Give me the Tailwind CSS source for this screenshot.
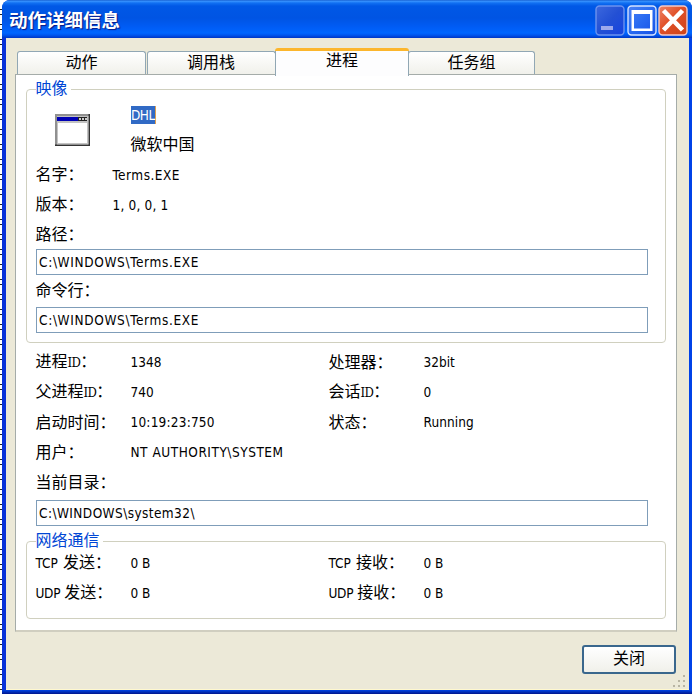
<!DOCTYPE html>
<html lang="zh-CN">
<head>
<meta charset="utf-8">
<title>动作详细信息</title>
<script src="https://cdn.jsdelivr.net/npm/@tailwindcss/browser@4"></script>
</head>
<body class="flex h-[694px] w-[692px] overflow-hidden bg-white font-['Noto_Sans_CJK_SC',sans-serif] text-[16px] text-black">
<!-- sliver of the window behind -->
<div class="w-[2px] shrink-0 bg-[repeating-linear-gradient(to_bottom,#fff_0_9px,#222_9px_10px,#fff_10px_14px,#222_14px_15px)]"></div>
<div class="flex h-[694px] w-[690px] flex-col overflow-hidden rounded-t-[8px] bg-[#0038d8]">
  <header class="flex h-[38px] shrink-0 items-center justify-between bg-[linear-gradient(to_bottom,#0a4fc4_0,#3c96ff_1px,#1170f2_3px,#0058e6_6px,#0054e3_18px,#005cf5_27px,#0066ff_33px,#0057f0_35px,#0036c5_38px)] pl-[7px] pr-[4px] pt-[2px]">
    <h1 class="whitespace-nowrap pb-[3px] text-[18.5px] font-bold leading-[30px] text-white [text-shadow:1px_1px_1px_#0a1883]">动作详细信息</h1>
    <div class="flex gap-[1.5px]">
      <svg width="30" height="31" viewBox="0 0 30 31"><defs><linearGradient id="a" x2="1" y2="1"><stop stop-color="#3c68de"/><stop offset=".5" stop-color="#2350d4"/><stop offset="1" stop-color="#1743e0"/></linearGradient></defs><rect x="1" y="1" width="28" height="29" rx="3.5" fill="url(#a)" stroke="#6c92ee" stroke-width="1.4"/><rect x="6" y="21" width="12" height="4" fill="#9da9ec"/></svg>
      <svg width="30" height="31" viewBox="0 0 30 31"><defs><linearGradient id="b" x2="1" y2="1"><stop stop-color="#4c82f4"/><stop offset=".5" stop-color="#286af1"/><stop offset="1" stop-color="#1550e5"/></linearGradient></defs><rect x="1" y="1" width="28" height="29" rx="3.5" fill="url(#b)" stroke="#d5e3ff" stroke-width="1.4"/><path fill="#fff" fill-rule="evenodd" d="M4.500 5h21v21h-21zM7 9v14.500h16V9z"/></svg>
      <svg width="30" height="31" viewBox="0 0 30 31"><defs><linearGradient id="c" x2="1" y2="1"><stop stop-color="#ee8468"/><stop offset=".45" stop-color="#e05028"/><stop offset="1" stop-color="#cc4218"/></linearGradient></defs><rect x="1" y="1" width="28" height="29" rx="3.5" fill="url(#c)" stroke="#f3c9c5" stroke-width="1.4"/><path d="M5.500 5.500l19 19.500M24.500 5.500L5.500 25" stroke="#fff" stroke-width="4.600"/></svg>
    </div>
  </header>
  <main class="relative flex h-[652px] flex-col border-l-[4px] border-r-[3px] border-l-[#0831d9] border-r-[#0042e8] bg-[#ece9d8] pl-[9px] pt-[10px] shadow-[inset_0_-1px_0_#fff8cf]">
    <nav class="flex h-[27px] items-end pl-[2px] leading-[19px]">
      <div class="h-[24px] w-[129px] rounded-t-[3px] border border-b-0 border-[#91a7b4] bg-linear-to-b from-white to-[#f0f0ea] text-center">动作</div>
      <div class="ml-[1px] h-[24px] w-[129px] rounded-t-[3px] border border-b-0 border-[#91a7b4] bg-linear-to-b from-white to-[#f0f0ea] pr-[1px] text-center">调用栈</div>
      <div class="relative z-10 -mb-[1px] ml-[-1px] h-[28px] w-[134px] rounded-t-[3px] border-t-[3px] border-t-[#fcb62c] bg-[#fdfdfe] text-center leading-[17px] shadow-[inset_1px_0_0_#91a7b4,inset_-1px_0_0_#91a7b4]">进程</div>
      <div class="-ml-[1px] h-[24px] w-[127px] rounded-t-[3px] border border-b-0 border-[#91a7b4] bg-linear-to-b from-white to-[#f0f0ea] text-center">任务组</div>
    </nav>
    <section class="-mt-[1px] h-[558px] w-[662px] border border-b-2 border-[#a5aca9] border-b-[#d0cec0] bg-white px-[10px] pt-[14px]">
      <!-- image group -->
      <div class="h-[254px] w-[640px] rounded-[4px] border border-[#d0d0bf] pl-[8.5px]">
        <div class="-mt-[14px] mb-[2px] w-[35px] bg-white text-[#0046d5] leading-[22px]"><span>映像</span></div>
        <div class="flex h-[60px]">
          <div class="w-[94.5px] pl-[19px] pt-[14px]">
            <svg width="36" height="34" viewBox="0 0 36 34"><path d="M0 0h35v32H0z" fill="#333"/><path d="M0 0h33.500v30.500H0z" fill="#909090"/><path d="M2 2h31.500v28.500H2z" fill="#c3c3c3"/><path d="M2 3h30v4H2z" fill="#0000b4"/><path d="M23 3h9v4h-9z" fill="#222"/><path d="M24 4h2v2h-2zM27 4h2v2h-2zM30 4h2v2h-2z" fill="#ccc"/><path d="M3 9h29v20H3z" fill="#fff"/></svg>
          </div>
          <div class="flex flex-col">
            <div class="flex h-[30px] items-center"><span class="ml-[1px] h-[18px] w-[25px] border-r border-[#e0a050] bg-[#316ac5] font-['DejaVu_Sans_Condensed','DejaVu_Sans',sans-serif] text-[13.5px] leading-[19px] tracking-[-0.5px] text-white">DHL</span></div>
            <div class="h-[29px] pl-[0.5px] leading-[27px]">微软中国</div>
          </div>
        </div>
        <div class="flex h-[30px] items-center"><div class="w-[77px] pb-[5px]">名字：</div><div class="font-['DejaVu_Sans_Condensed','DejaVu_Sans',sans-serif] text-[13.5px] tracking-[0.5px]">Terms.EXE</div></div>
        <div class="flex h-[30px] items-center"><div class="w-[77px] pb-[5px]">版本：</div><div class="font-['DejaVu_Sans_Condensed','DejaVu_Sans',sans-serif] text-[13.5px] tracking-[0.2px]">1, 0, 0, 1</div></div>
        <div class="flex h-[29px] items-center pb-[4px]">路径：</div>
        <div class="flex h-[26px] w-[612px] items-center border border-[#7f9db9] pl-[2.5px] font-['DejaVu_Sans_Condensed','DejaVu_Sans',sans-serif] text-[13.5px] tracking-[0.65px]">C:\WINDOWS\Terms.EXE</div>
        <div class="flex h-[32px] items-center pb-[4px]">命令行：</div>
        <div class="flex h-[26px] w-[612px] items-center border border-[#7f9db9] pl-[2.5px] font-['DejaVu_Sans_Condensed','DejaVu_Sans',sans-serif] text-[13.5px] tracking-[0.65px]">C:\WINDOWS\Terms.EXE</div>
      </div>
      <!-- process details -->
      <div class="grid grid-cols-[95px_198px_95px_1fr] auto-rows-[30px] items-center whitespace-nowrap pl-[9.5px] pt-[4px]">
        <div class="pb-[3px]">进程<span class="font-['DejaVu_Serif_Condensed','DejaVu_Sans',sans-serif] text-[13px] tracking-[-0.6px]">ID</span>：</div><div class="font-['DejaVu_Sans_Condensed','DejaVu_Sans',sans-serif] text-[13.5px]">1348</div>
        <div class="pb-[3px]">处理器：</div><div class="font-['DejaVu_Sans_Condensed','DejaVu_Sans',sans-serif] text-[13.5px]">32bit</div>
        <div class="pb-[3px]">父进程<span class="font-['DejaVu_Serif_Condensed','DejaVu_Sans',sans-serif] text-[13px] tracking-[-0.6px]">ID</span>：</div><div class="font-['DejaVu_Sans_Condensed','DejaVu_Sans',sans-serif] text-[13.5px]">740</div>
        <div class="pb-[3px]">会话<span class="font-['DejaVu_Serif_Condensed','DejaVu_Sans',sans-serif] text-[13px] tracking-[-0.6px]">ID</span>：</div><div class="font-['DejaVu_Sans_Condensed','DejaVu_Sans',sans-serif] text-[13.5px]">0</div>
        <div class="pb-[3px]">启动时间：</div><div class="font-['DejaVu_Sans_Condensed','DejaVu_Sans',sans-serif] text-[13.5px] tracking-[0.2px]">10:19:23:750</div>
        <div class="pb-[3px]">状态：</div><div class="font-['DejaVu_Sans_Condensed','DejaVu_Sans',sans-serif] text-[13.5px] tracking-[0.1px]">Running</div>
        <div class="pb-[3px]">用户：</div><div class="col-span-3 font-['DejaVu_Sans_Condensed','DejaVu_Sans',sans-serif] text-[13.5px] tracking-[0.53px]">NT AUTHORITY\SYSTEM</div>
        <div class="col-span-4 pb-[3px]">当前目录：</div>
      </div>
      <div class="ml-[9.5px] mt-[3px] flex h-[26px] w-[612px] items-center border border-[#7f9db9] pl-[2.5px] font-['DejaVu_Sans_Condensed','DejaVu_Sans',sans-serif] text-[13.5px] tracking-[0.42px]">C:\WINDOWS\system32\</div>
      <!-- network group -->
      <div class="mt-[15px] h-[78px] w-[640px] rounded-[4px] border border-[#d0d0bf] pl-[8.5px]">
        <div class="-mt-[14px] w-[67px] bg-white text-[#0046d5] leading-[22px]"><span>网络通信</span></div>
        <div class="-mt-[2px] grid grid-cols-[95px_198px_95px_1fr] auto-rows-[30px] items-center whitespace-nowrap">
          <div class="pb-[3px]"><span class="mr-[5px] font-['DejaVu_Sans_Condensed','DejaVu_Sans',sans-serif] text-[13.5px]">TCP</span>发送：</div><div class="font-['DejaVu_Sans_Condensed','DejaVu_Sans',sans-serif] text-[13.5px]">0 B</div>
          <div class="pb-[3px]"><span class="mr-[5px] font-['DejaVu_Sans_Condensed','DejaVu_Sans',sans-serif] text-[13.5px]">TCP</span>接收：</div><div class="font-['DejaVu_Sans_Condensed','DejaVu_Sans',sans-serif] text-[13.5px]">0 B</div>
          <div class="pb-[3px]"><span class="mr-[4px] font-['DejaVu_Sans_Condensed','DejaVu_Sans',sans-serif] text-[13.5px] tracking-[-0.3px]">UDP</span>发送：</div><div class="font-['DejaVu_Sans_Condensed','DejaVu_Sans',sans-serif] text-[13.5px]">0 B</div>
          <div class="pb-[3px]"><span class="mr-[4px] font-['DejaVu_Sans_Condensed','DejaVu_Sans',sans-serif] text-[13.5px] tracking-[-0.3px]">UDP</span>接收：</div><div class="font-['DejaVu_Sans_Condensed','DejaVu_Sans',sans-serif] text-[13.5px]">0 B</div>
        </div>
      </div>
    </section>
    <button class="ml-[567px] mt-[13px] h-[29px] w-[94px] rounded-[3px] border-2 border-[#3a678d] bg-linear-to-b from-white to-[#f0f0ea] pb-[4px] leading-[21px]">关闭</button>
    <svg class="absolute bottom-[2px] right-[3px]" width="13" height="13" viewBox="0 0 13 13"><path fill="#b8b4a2" d="M10 0h2v2h-2zM5 5h2v2H5zM10 5h2v2h-2zM0 10h2v2H0zM5 10h2v2H5zM10 10h2v2h-2z"/></svg>
  </main>
  <div class="h-[4px] shrink-0 bg-linear-to-b from-[#0045e6] to-[#00138c]"></div>
</div>
</body>
</html>
